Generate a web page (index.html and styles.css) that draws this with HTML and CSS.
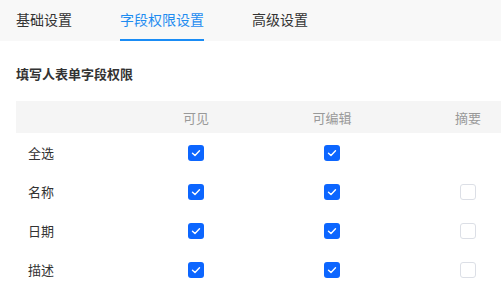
FILE: index.html
```html
<!DOCTYPE html>
<html lang="zh-CN">
<head>
<meta charset="utf-8">
<link rel="stylesheet" href="styles.css">
</head>
<body>
<div class="tabs">
  <div class="tab">基础设置</div>
  <div class="tab active">字段权限设置</div>
  <div class="tab">高级设置</div>
</div>
<div class="title">填写人表单字段权限</div>
<div class="table">
  <div class="row head">
    <div class="cell label"></div>
    <div class="cell">可见</div>
    <div class="cell">可编辑</div>
    <div class="cell">摘要</div>
  </div>
  <div class="row">
    <div class="cell label">全选</div>
    <div class="cell"><span class="cb on"><svg viewBox="0 0 16 16"><path d="M4.5 8.2 L7 10.5 L11.5 5.8"/></svg></span></div>
    <div class="cell"><span class="cb on"><svg viewBox="0 0 16 16"><path d="M4.5 8.2 L7 10.5 L11.5 5.8"/></svg></span></div>
    <div class="cell"></div>
  </div>
  <div class="row">
    <div class="cell label">名称</div>
    <div class="cell"><span class="cb on"><svg viewBox="0 0 16 16"><path d="M4.5 8.2 L7 10.5 L11.5 5.8"/></svg></span></div>
    <div class="cell"><span class="cb on"><svg viewBox="0 0 16 16"><path d="M4.5 8.2 L7 10.5 L11.5 5.8"/></svg></span></div>
    <div class="cell"><span class="cb"></span></div>
  </div>
  <div class="row">
    <div class="cell label">日期</div>
    <div class="cell"><span class="cb on"><svg viewBox="0 0 16 16"><path d="M4.5 8.2 L7 10.5 L11.5 5.8"/></svg></span></div>
    <div class="cell"><span class="cb on"><svg viewBox="0 0 16 16"><path d="M4.5 8.2 L7 10.5 L11.5 5.8"/></svg></span></div>
    <div class="cell"><span class="cb"></span></div>
  </div>
  <div class="row">
    <div class="cell label">描述</div>
    <div class="cell"><span class="cb on"><svg viewBox="0 0 16 16"><path d="M4.5 8.2 L7 10.5 L11.5 5.8"/></svg></span></div>
    <div class="cell"><span class="cb on"><svg viewBox="0 0 16 16"><path d="M4.5 8.2 L7 10.5 L11.5 5.8"/></svg></span></div>
    <div class="cell"><span class="cb"></span></div>
  </div>
</div>
</body>
</html>
```
FILE: styles.css
```css
html, body {
  margin: 0;
  padding: 0;
  background: #fff;
  overflow: hidden;
  font-family: "Noto Sans CJK SC", "Noto Sans", sans-serif;
  color: #333;
}
.tabs {
  display: flex;
  gap: 48px;
  padding-left: 16px;
  height: 41px;
  background: #f8f8f8;
}
.tab {
  box-sizing: border-box;
  height: 41px;
  line-height: 38px;
  font-size: 14px;
  color: #333;
  border-bottom: 2px solid transparent;
}
.tab.active {
  color: #1f8cf0;
  border-bottom-color: #1a8cf5;
}
.title {
  margin: 23px 0 17px 16px;
  font-size: 13px;
  line-height: 20px;
  font-weight: bold;
  color: #333;
}
.table {
  margin-left: 16px;
  overflow: hidden;
}
.row {
  display: grid;
  grid-template-columns: 112px 136px 136px 136px;
  width: 520px;
  height: 39px;
  align-items: center;
  font-size: 13px;
}
.row.head {
  height: 32px;
  background: #f5f5f5;
  color: #999;
}
.cell {
  display: flex;
  justify-content: center;
  align-items: center;
}
.cell.label {
  justify-content: flex-start;
  padding-left: 12px;
  color: #333;
}
.cb {
  box-sizing: border-box;
  width: 16px;
  height: 16px;
  border-radius: 3px;
  border: 1px solid #dcdfe6;
  background: #fff;
  display: block;
}
.cb.on {
  border: none;
  background: #0c66ff;
}
.cb svg {
  display: block;
  width: 16px;
  height: 16px;
}
.cb svg path {
  fill: none;
  stroke: #fff;
  stroke-width: 1.4;
  stroke-linecap: round;
  stroke-linejoin: round;
}
```
